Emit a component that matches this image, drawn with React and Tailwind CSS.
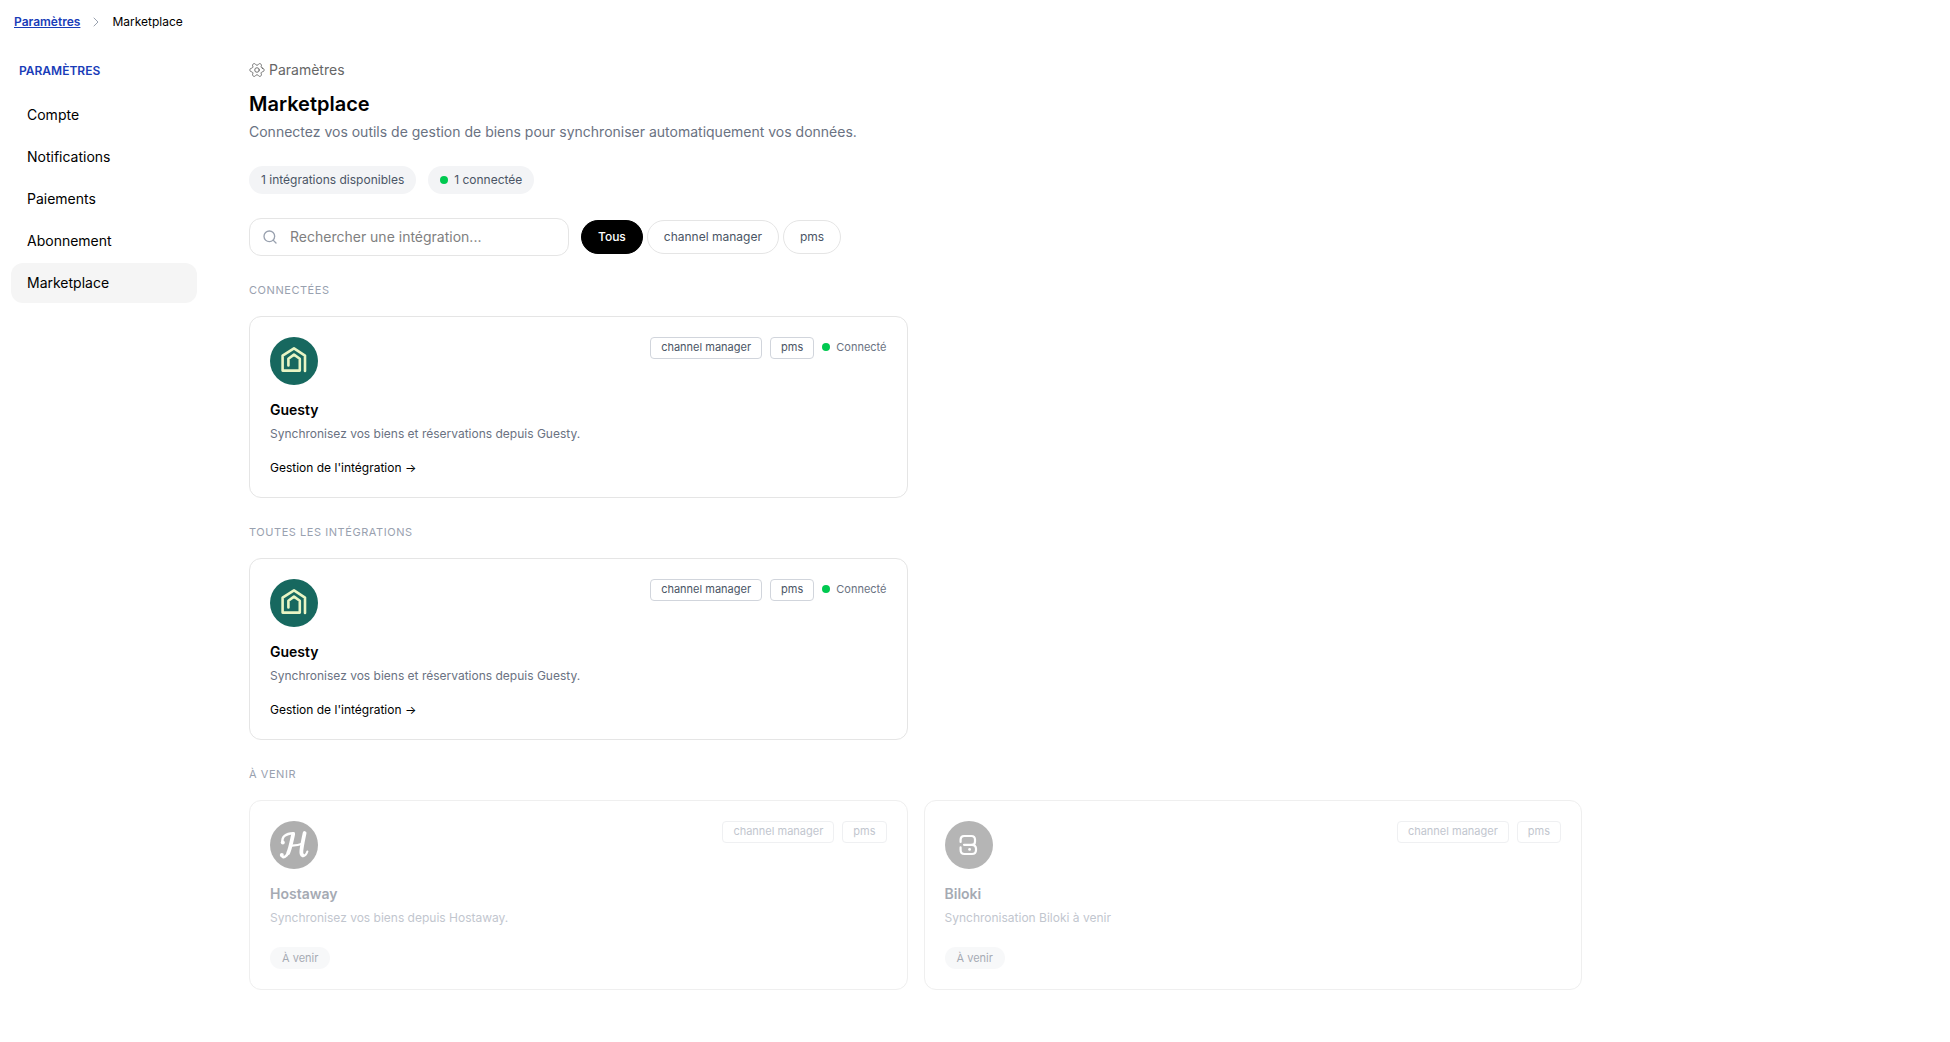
import React, { useState } from "react";
import { Search, ChevronRight } from "lucide-react";

const NAV_ITEMS = ["Compte", "Notifications", "Paiements", "Abonnement", "Marketplace"];

const FILTERS = ["Tous", "channel manager", "pms"];

const INTEGRATIONS = [
  {
    id: "guesty",
    name: "Guesty",
    description: "Synchronisez vos biens et réservations depuis Guesty.",
    tags: ["channel manager", "pms"],
    connected: true,
    logo: GuestyLogo,
  },
];

const UPCOMING = [
  {
    id: "hostaway",
    name: "Hostaway",
    description: "Synchronisez vos biens depuis Hostaway.",
    tags: ["channel manager", "pms"],
    logo: HostawayLogo,
  },
  {
    id: "biloki",
    name: "Biloki",
    description: "Synchronisation Biloki à venir",
    tags: ["channel manager", "pms"],
    logo: BilokiLogo,
  },
];

// ------------------------------
// LOGOS
// ------------------------------
function GuestyLogo() {
  return (
    <svg viewBox="0 0 48 48" className="size-12" aria-hidden="true">
      <circle cx="24" cy="24" r="24" fill="#17685f" />
      <g fill="none" stroke="#e9f5c4" strokeWidth="2.6" strokeLinecap="round" strokeLinejoin="round">
        <path d="M35 34V18.6L24 11.4L12.6 18.6V33.6H29.8V21.8L24 17.6L18.4 21.8V28.4" />
      </g>
    </svg>
  );
}

function HostawayLogo() {
  return (
    <svg viewBox="0 0 48 48" className="size-12" aria-hidden="true">
      <circle cx="24" cy="24" r="24" fill="#7b7b7b" />
      <g fill="none" stroke="#fff" strokeLinecap="round" strokeLinejoin="round">
        <path strokeWidth="2.4" d="M12.6 21.6C11.4 16 15.4 12.4 23.6 12.2" />
        <path strokeWidth="3.8" d="M23.2 13C21.6 20 20.4 27 18.2 32" />
        <path strokeWidth="2.6" d="M18.4 31.6C16.6 36 12.800 37.600 11.600 34.600" />
        <path strokeWidth="3.8" d="M34.600 12C33.400 18 32 24 31.400 29.600C31.200 32 31.600 33.800 32.800 34.400" />
        <path strokeWidth="2" d="M32.800 35C35 35 36.600 33 37.400 30.400" />
        <path strokeWidth="2.2" d="M20.4 24.6C24.6 24.8 29 24.2 33 22.6" />
      </g>
      <circle cx="12.8" cy="21.4" r="2" fill="#fff" />
      <circle cx="11.8" cy="34" r="2" fill="#fff" />
    </svg>
  );
}

function BilokiLogo() {
  return (
    <svg viewBox="0 0 48 48" className="size-12" aria-hidden="true">
      <circle cx="24" cy="24" r="24" fill="#858585" />
      <g fill="none" stroke="#fff" strokeWidth="2.2" strokeLinecap="round" strokeLinejoin="round">
        <path d="M15.6 21V18.6Q15.6 15 19 15H26.4Q30 15 30 18.6V20.4Q30 23.8 27 23.8H19" />
        <path d="M27 23.8Q31 24.2 31 27.6V29Q31 33 27 33H19.4Q15.6 33 15.6 29V26.4" />
      </g>
      <circle cx="24.6" cy="28.4" r="1.4" fill="#fff" />
    </svg>
  );
}

function GearIcon() {
  return (
    <svg
      viewBox="0 0 24 24"
      className="size-4"
      fill="none"
      stroke="currentColor"
      strokeWidth="1.4"
      strokeLinecap="round"
      strokeLinejoin="round"
      aria-hidden="true"
    >
      <path
        transform="rotate(90 12 12)"
        d="M9.4 3.6C9.600 2 10.400 1.400 12 1.400S14.400 2 14.600 3.600C14.800 5.400 16.400 6.300 18 5.600C19.500 4.900 20.400 5.300 21.200 6.700S21.500 9.100 20.200 10.100C18.900 11.100 18.900 12.900 20.200 13.900C21.500 14.900 22 15.900 21.200 17.300S19.500 19.100 18 18.400C16.400 17.700 14.800 18.600 14.600 20.400C14.400 22 13.600 22.600 12 22.600S9.600 22 9.400 20.400C9.200 18.600 7.600 17.700 6 18.400C4.500 19.100 3.600 18.700 2.800 17.300S2.500 14.900 3.800 13.900C5.100 12.900 5.100 11.100 3.800 10.100C2.500 9.100 2 8.100 2.800 6.700S4.500 4.900 6 5.600C7.600 6.300 9.200 5.400 9.400 3.600Z"
      />
      <circle cx="12" cy="12" r="3.4" />
    </svg>
  );
}

// ------------------------------
// CARD
// ------------------------------
function IntegrationCard({ item, upcoming }) {
  const Logo = item.logo;

  return (
    <article
      className={`rounded-xl border border-[#e5e5e5] bg-white p-5 ${
        upcoming ? "opacity-60" : ""
      }`}
    >
      <div className="flex items-start justify-between">
        <Logo />
        <div className="flex items-center gap-2">
          {item.tags.map((tag) => (
            <span
              key={tag}
              className={`rounded-sm border px-2.5 pb-0.5 text-[11px] leading-[18px] ${
                upcoming ? "border-gray-200 text-gray-400" : "border-gray-300 text-gray-600"
              }`}
            >
              {tag}
            </span>
          ))}
          {item.connected && (
            <span className="flex items-center gap-1.5 pb-0.5 text-[11px] leading-[18px] text-gray-500">
              <span className="size-2 rounded-full bg-[#00c950]" />
              Connecté
            </span>
          )}
        </div>
      </div>

      <h3
        className={`mt-4 text-sm leading-[18px] font-semibold ${
          upcoming ? "text-gray-500" : "text-black"
        }`}
      >
        {item.name}
      </h3>
      <p
        className={`mt-1.5 text-xs leading-[18px] ${
          upcoming ? "text-gray-400" : "text-gray-500"
        }`}
      >
        {item.description}
      </p>

      {upcoming ? (
        <span className="mt-5 inline-block rounded-full bg-gray-100 px-3 text-[11px] leading-[22px] text-gray-500">
          À venir
        </span>
      ) : (
        <a href="#" className="mt-4 block w-fit text-xs leading-[18px] text-black">
          Gestion de l'intégration →
        </a>
      )}
    </article>
  );
}

function Section({ title, items, upcoming }) {
  return (
    <section className="mt-6">
      <h2 className="text-[11px] leading-5 tracking-wider text-gray-400 uppercase">{title}</h2>
      <div className="mt-4 grid grid-cols-2 gap-4">
        {items.map((item) => (
          <IntegrationCard key={item.id} item={item} upcoming={upcoming} />
        ))}
      </div>
    </section>
  );
}

export default function MarketplacePage() {
  const [search, setSearch] = useState("");
  const [filter, setFilter] = useState("Tous");

  const visible = INTEGRATIONS.filter(
    (i) =>
      i.name.toLowerCase().includes(search.toLowerCase()) &&
      (filter === "Tous" || i.tags.includes(filter))
  );

  return (
    <div className="min-h-screen bg-white font-['Inter',sans-serif] text-black">
      {/* Breadcrumb */}
      <nav className="flex items-center gap-2 px-3.5 pt-3 text-xs leading-5">
        <a href="#" className="font-semibold text-[#193cb8] underline">
          Paramètres
        </a>
        <ChevronRight className="size-4 text-gray-400" strokeWidth={1.5} aria-hidden="true" />
        <span>Marketplace</span>
      </nav>

      <div className="flex pt-7">
        {/* Sidebar */}
        <aside className="mr-13 ml-[11px] w-[186px] shrink-0">
          <p className="px-2 pt-px text-xs leading-5 font-semibold text-[#193cb8] uppercase">
            Paramètres
          </p>
          <ul className="mt-3.5 space-y-0.5">
            {NAV_ITEMS.map((label) => (
              <li key={label}>
                <a
                  href="#"
                  className={`block rounded-xl px-4 text-sm leading-10 ${
                    label === "Marketplace" ? "bg-[#f5f5f5]" : ""
                  }`}
                >
                  {label}
                </a>
              </li>
            ))}
          </ul>
        </aside>

        {/* Content */}
        <main className="max-w-[1333px] min-w-0 flex-1">
          <div className="flex items-center gap-1 text-sm leading-5 text-[#666666]">
            <GearIcon />
            Paramètres
          </div>
          <h1 className="mt-3 text-xl leading-6 font-semibold">Marketplace</h1>
          <p className="mt-1.5 text-sm leading-5 text-gray-500">
            Connectez vos outils de gestion de biens pour synchroniser automatiquement vos données.
          </p>

          <div className="mt-6 flex gap-3 text-xs leading-7 text-gray-600">
            <span className="rounded-full bg-gray-100 px-3">1 intégrations disponibles</span>
            <span className="flex items-center gap-1.5 rounded-full bg-gray-100 px-3">
              <span className="size-2 rounded-full bg-[#00c950]" />
              1 connectée
            </span>
          </div>

          <div className="mt-6 flex items-center gap-3">
            <label className="flex h-[38px] w-80 items-center gap-3 rounded-xl border border-[#e5e5e5] px-3">
              <Search className="size-4 text-gray-400" strokeWidth={2} aria-hidden="true" />
              <input
                type="text"
                aria-label="Rechercher une intégration"
                value={search}
                onChange={(e) => setSearch(e.target.value)}
                placeholder="Rechercher une intégration..."
                className="min-w-0 flex-1 text-sm outline-none placeholder:text-[#7f7f7f]"
              />
            </label>
            <div className="flex gap-1">
              {FILTERS.map((f) => (
                <button
                  key={f}
                  type="button"
                  onClick={() => setFilter(f)}
                  className={`rounded-full border px-4 text-xs leading-8 ${
                    filter === f
                      ? "border-black bg-black font-medium text-white"
                      : "border-[#e5e5e5] bg-white text-gray-600"
                  }`}
                >
                  {f}
                </button>
              ))}
            </div>
          </div>

          <Section title="Connectées" items={visible.filter((i) => i.connected)} />
          <Section title="Toutes les intégrations" items={visible} />
          <Section title="À venir" items={UPCOMING} upcoming />
        </main>
      </div>
    </div>
  );
}
